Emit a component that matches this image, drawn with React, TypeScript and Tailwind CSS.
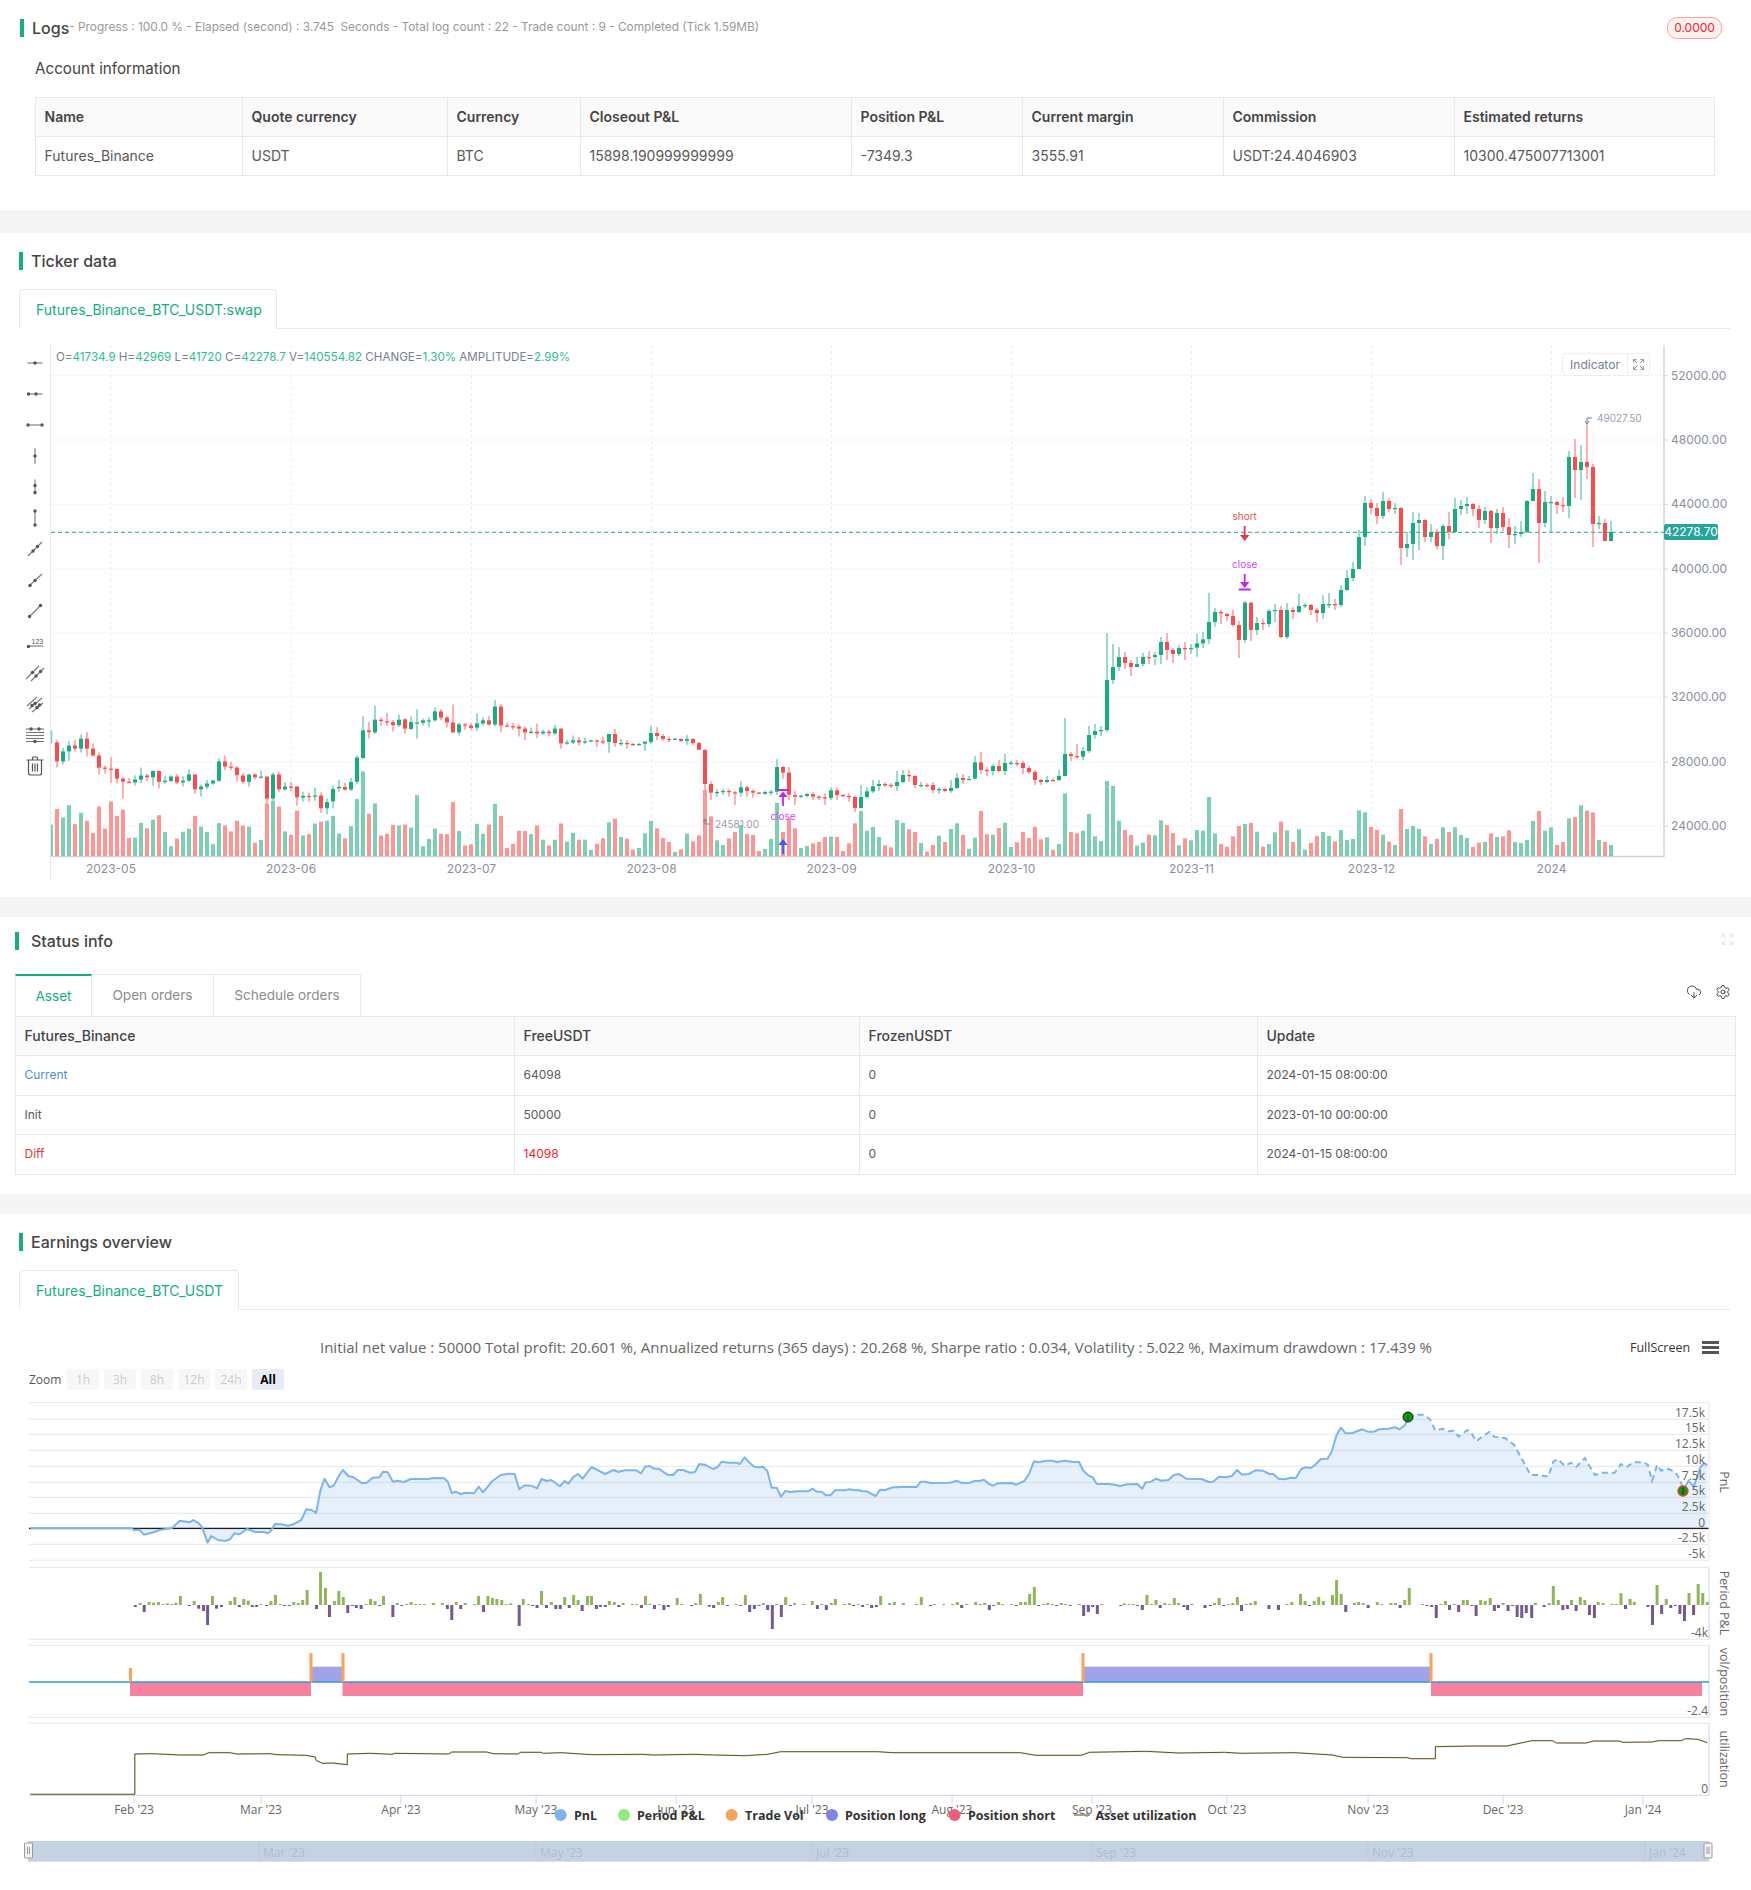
import { CloudDownload, Expand, Settings } from 'lucide-react';

type Candle = [number, number, number, number, number, number];

const z3: Candle[] = [
  [1,1168,1170,1132,1170,1405],[0,1167,1222,1160,1240,1360],[1,1193,1222,1183,1230,1385],[1,1176,1193,1163,1220,1349],[0,1176,1185,1160,1193,1404],
  [1,1156,1185,1144,1196,1371],[0,1156,1185,1137,1208,1394],[0,1185,1205,1170,1208,1430],[0,1205,1240,1196,1260,1353],[0,1240,1243,1234,1257,1417],
  [0,1243,1245,1210,1285,1339],[0,1244,1272,1244,1286,1380],[0,1272,1281,1268,1330,1362],[0,1281,1283,1270,1285,1444],[1,1275,1283,1262,1292,1443],
  [1,1263,1275,1240,1285,1400],[0,1263,1268,1258,1280,1416],[1,1250,1268,1248,1292,1391],[0,1250,1281,1248,1300,1378],[1,1278,1281,1263,1288,1427],
  [1,1266,1279,1262,1282,1468],[0,1266,1283,1258,1288,1446],[1,1278,1283,1265,1295,1426],[1,1260,1278,1246,1282,1417],[0,1260,1303,1260,1315,1380],
  [1,1295,1303,1290,1324,1411],[1,1286,1295,1276,1302,1427],[1,1278,1286,1275,1290,1462],[1,1222,1278,1214,1282,1401],[0,1222,1237,1205,1248,1408],
  [0,1237,1240,1222,1248,1425],[0,1240,1262,1236,1280,1394],[0,1263,1281,1255,1288,1408],[1,1260,1281,1258,1295,1411],[0,1260,1268,1258,1274,1458],
  [1,1266,1269,1249,1272,1450],[0,1266,1330,1266,1345,1344],[1,1260,1330,1255,1350,1337],[0,1260,1303,1252,1310,1353],[1,1295,1303,1282,1308,1425],
  [0,1295,1298,1282,1308,1435],[0,1295,1326,1295,1350,1365],[1,1322,1327,1310,1338,1437],[0,1322,1324,1312,1338,1433],[1,1321,1324,1298,1336,1402],
  [0,1321,1358,1312,1372,1397],[1,1340,1358,1330,1375,1394],[1,1302,1338,1292,1358,1380],[1,1296,1300,1275,1310,1431],[0,1296,1304,1284,1307,1445],
  [1,1282,1304,1270,1307,1410],[1,1211,1281,1205,1288,1331],[1,1132,1212,1092,1215,1251],[0,1132,1137,1108,1156,1374],[1,1101,1138,1060,1142,1344],
  [0,1101,1105,1094,1120,1437],[0,1106,1108,1082,1118,1432],[0,1108,1117,1102,1135,1406],[1,1101,1117,1086,1122,1408],[0,1100,1127,1098,1142,1405],
  [1,1108,1128,1092,1130,1414],[1,1109,1111,1071,1156,1320],[1,1103,1110,1098,1118,1468],[1,1103,1105,1095,1124,1447],[1,1077,1103,1066,1106,1417],
  [0,1077,1095,1070,1103,1432],[0,1095,1109,1090,1124,1433],[0,1109,1138,1057,1138,1340],[1,1115,1138,1110,1146,1424],[0,1115,1117,1110,1130,1466],
  [0,1118,1125,1110,1130,1463],[1,1112,1124,1083,1134,1403],[1,1103,1112,1095,1118,1432],[0,1103,1115,1090,1118,1405],[1,1063,1115,1045,1120,1345],
  [0,1063,1118,1055,1138,1380],[0,1118,1120,1110,1122,1473],[0,1120,1122,1110,1130,1461],[0,1121,1127,1115,1150,1423],[0,1127,1138,1121,1160,1424],
  [1,1136,1138,1124,1142,1433],[0,1136,1141,1112,1155,1408],[1,1136,1141,1130,1145,1449],[0,1136,1140,1130,1150,1466],[1,1127,1141,1116,1145,1449],
  [0,1127,1170,1127,1185,1402],[1,1167,1170,1160,1174,1455],[1,1161,1167,1147,1172,1429],[0,1161,1167,1152,1176,1449],[1,1164,1167,1153,1172,1449],
  [1,1161,1164,1160,1166,1479],[0,1161,1164,1160,1180,1461],
];

const z4: Candle[] = [
  [0,784,787,770,792,1075],[1,762,786,762,818,1027],[0,762,789,746,800,1016],[1,789,791,777,798,1071],[0,789,792,780,806,1076],
  [0,792,794,789,797,1109],[1,792,795,788,797,1104],[1,785,791,783,812,1060],[1,759,786,738,792,1023],[0,759,768,741,780,1045],
  [0,768,777,762,782,1074],[0,777,779,770,786,1086],[1,776,778,774,780,1116],[0,777,783,775,786,1108],[1,777,782,765,795,1061],
  [0,777,789,774,795,1084],[0,789,809,786,810,1066],[0,810,912,808,1030,930],[0,912,938,904,960,1009],[1,936,938,928,950,1081],
  [1,933,936,926,945,1095],[0,933,936,926,950,1075],[0,937,939,933,975,1056],[1,922,938,903,950,1035],[0,922,933,918,950,1062],
  [0,933,938,928,953,1065],[0,938,941,936,942,1113],[1,936,941,932,944,1107],[1,935,938,930,946,1077],[1,861,935,837,945,969],
  [0,861,878,858,896,1056],[0,878,944,862,960,1016],[0,945,950,934,974,1045],[1,947,950,945,955,1104],[1,942,948,938,952,1098],
  [0,942,950,937,960,1090],[0,950,953,946,960,1086],[0,952,954,940,975,1071],[1,931,954,922,960,1070],[0,931,945,922,960,1071],
  [0,945,948,942,950,1113],[0,948,950,940,965,1090],[0,951,984,948,996,1030],[1,951,984,915,984,993],[1,934,951,922,956,1052],
  [1,919,934,900,940,1041],[1,912,918,900,932,1071],[0,912,916,906,922,1096],[0,915,918,910,924,1102],[1,906,918,873,932,1020],
  [1,885,906,870,910,1029],[0,885,888,870,905,1048],[0,888,915,885,924,1056],[1,915,918,906,922,1089],[0,915,917,910,922,1115],
  [0,915,930,906,940,1095],[1,927,930,922,942,1067],[0,927,933,924,936,1086],[1,924,933,900,938,1047],[1,894,924,880,928,1030],
  [0,894,900,882,912,1065],[1,897,900,888,900,1107],[1,847,896,828,898,1073],[0,847,870,816,882,993],[0,870,873,862,888,1063],
  [1,858,873,852,886,1064],[0,858,873,840,876,1044],[1,849,873,822,885,1028],[1,848,851,842,856,1101],[0,849,851,840,858,1087],
  [0,849,864,843,882,1056],[0,864,876,858,882,1074],[0,876,900,870,915,1040],[0,900,906,897,915,1078],[1,900,906,888,908,1072],
  [0,900,902,895,904,1109],[1,888,900,870,903,1092],[1,822,888,714,888,940],[0,822,828,816,843,1056],[0,828,831,792,837,1060],
  [1,813,830,800,840,1052],[1,765,813,738,818,1002],[1,753,765,732,776,1069],[1,750,753,738,768,1083],[1,600,750,459,756,903],
  [1,561,600,492,612,918],[1,531,561,501,573,1022],[0,531,549,516,567,1050],[0,549,561,540,588,1065],[1,552,561,531,561,1097],
  [1,531,552,519,558,1088],[0,531,534,513,552,1064],[1,525,531,516,555,1066],[1,486,525,471,552,1021],[0,486,510,459,540,1035],
  [0,510,522,504,549,1059],[1,504,522,495,528,1096],[0,504,507,486,540,1075],[1,504,507,492,522,1081],
];

const z5: Candle[] = [
  [1,790,803,762,830,1350],[1,778,790,755,804,1352],[1,726,777,638,792,1251],[1,696,726,684,740,1360],[0,696,700,690,732,1392],
  [0,702,708,698,722,1400],[0,708,735,690,740,1369],[0,735,780,723,834,1338],[1,668,780,662,789,1332],[0,668,750,666,783,1329],
  [1,729,750,711,765,1355],[0,729,732,716,750,1400],[1,693,732,687,741,1392],[1,690,693,672,726,1357],[0,690,771,678,774,1325],
  [1,690,771,669,777,1351],[0,690,696,681,717,1386],[1,678,696,642,699,1348],[1,675,678,669,684,1409],[0,675,690,672,705,1389],
  [0,690,699,684,726,1368],[1,672,699,645,717,1356],[1,672,675,639,684,1368],[0,672,675,657,690,1384],[1,630,675,615,681,1350],
  [1,594,630,570,633,1380],[1,567,594,546,603,1377],[1,471,567,450,567,1291],[1,369,471,348,498,1297],[0,369,384,357,402,1341],
  [0,384,408,369,432,1350],[1,363,408,336,417,1364],[0,363,387,354,396,1385],[1,384,387,369,402,1395],[0,384,504,381,555,1287],
  [1,492,504,456,531,1347],[1,429,492,396,540,1338],[1,420,429,399,510,1347],[0,420,471,417,486,1369],[1,456,471,432,486,1392],
  [0,456,498,447,507,1377],[1,438,498,432,540,1342],[0,438,456,396,477,1356],[1,387,456,354,459,1342],[1,378,387,360,405,1365],
  [1,372,378,351,402,1374],[0,372,387,369,408,1401],[0,387,420,375,444,1388],[1,393,420,381,432,1386],[0,393,444,390,489,1360],
  [1,399,444,387,462,1371],[0,399,441,381,453,1369],[0,441,465,414,504,1351],[1,462,465,438,492,1386],[1,456,462,423,471,1389],
  [1,363,456,360,459,1380],[1,327,363,279,363,1323],[0,327,429,297,549,1293],[1,366,429,333,441,1352],[1,366,369,348,456,1342],
  [0,366,375,363,402,1395],[0,375,378,351,396,1386],[1,231,378,213,414,1315],[0,231,270,177,354,1311],[1,246,270,195,360,1276],
  [0,246,261,132,297,1292],[0,261,432,252,501,1297],[1,429,432,408,447,1380],[0,429,483,417,483,1386],[1,456,483,423,483,1395],
];

const candles: Candle[] = [
  ...z3.map((c) => [c[0], ...c.slice(1).map((v) => 340 + v / 2.9)] as Candle),
  ...z4.map((c) => [c[0], ...c.slice(1).map((v) => 480 + v / 3)] as Candle),
  ...z5.map((c) => [c[0], ...c.slice(1).map((v) => 380 + v / 3)] as Candle),
];

const priceTicks: [string, number][] = [
  ['52000.00', 375.7], ['48000.00', 440], ['44000.00', 504.3], ['40000.00', 569],
  ['36000.00', 633], ['32000.00', 697], ['28000.00', 762], ['24000.00', 826],
];
const dateTicks: [string, number][] = [
  ['2023-05', 111], ['2023-06', 291], ['2023-07', 471.5], ['2023-08', 651.5], ['2023-09', 831.5],
  ['2023-10', 1011.5], ['2023-11', 1191.5], ['2023-12', 1371.5], ['2024', 1551.5],
];

type ToolIcon = { lines: number[][]; dots: number[][]; label?: boolean; trash?: boolean };
const toolIcons: ToolIcon[] = [
  { lines: [[2.5, 10, 17.5, 10]], dots: [[10, 10]] },
  { lines: [[2.5, 10, 17.5, 10]], dots: [[3.5, 10], [11, 10]] },
  { lines: [[3, 10, 17, 10]], dots: [[3, 10], [17, 10]] },
  { lines: [[10, 2, 10, 18]], dots: [[10, 10]] },
  { lines: [[10, 2.5, 10, 17.5]], dots: [[10, 8.5], [10, 15.5]] },
  { lines: [[10, 3, 10, 17]], dots: [[10, 3], [10, 17]] },
  { lines: [[3, 17, 17, 3]], dots: [[8, 12], [12.5, 7.5]] },
  { lines: [[4, 16, 17, 4]], dots: [[5, 15.5], [10, 10.5]] },
  { lines: [[4, 16, 16, 4]], dots: [[4.5, 15.5], [15.5, 4.5]] },
  { lines: [[4, 14, 18, 14]], dots: [[3.5, 14.5]], label: true },
  { lines: [[1, 16, 14, 3], [6, 18, 19, 5]], dots: [[7.5, 9.5], [11, 13], [15.5, 8.5]] },
  { lines: [[2, 12, 12, 3], [4, 15, 17, 4], [7, 18, 18, 9]], dots: [[7, 11.5], [10, 9.5], [12, 13.5], [14.5, 11]] },
  { lines: [[1, 4, 19, 4], [1, 7.5, 19, 7.5], [1, 10.5, 19, 10.5], [1, 13.5, 19, 13.5], [1, 16.5, 19, 16.5]], dots: [[6, 4], [14, 4], [10, 16.5]] },
  { lines: [], dots: [], trash: true },
];

const pnlA = [
  [68,445],[295,445],[300,450],[312,449],[322,464],[340,458],[358,450],[385,444],[403,422],[425,427],[433,420],[445,430],[453,442],[465,488],[473,468],[488,480],
  [505,483],[515,478],[525,460],[537,463],[553,447],[572,456],[590,456],[600,460],[607,452],[616,432],[630,433],[645,437],[660,431],[675,420],[686,388],[698,390],
  [708,399],[718,330],[727,296],[738,322],[748,316],[760,285],[768,270],[780,288],[792,292],[810,309],[820,309],[835,293],[850,292],[858,275],[868,276],[880,305],
  [890,302],[905,306],[920,297],[960,297],[970,294],[995,295],[1003,305],[1012,339],[1020,335],[1032,342],[1042,338],[1062,340],[1072,320],[1082,337],[1103,303],
  [1122,285],[1140,281],[1153,282],[1163,328],[1175,316],[1190,317],[1203,325],[1213,297],[1225,303],[1235,300],[1254,319],[1265,303],[1273,311],[1285,290],[1295,282],
  [1305,296],[1325,261],[1340,271],[1355,282],[1375,270],[1385,276],[1400,271],[1425,271],[1436,280],[1445,260],[1455,258],[1465,266],[1475,266],[1495,284],[1508,285],
  [1518,270],[1530,270],
].map(([x, y]) => [x / 2.24, 1380 + y / 3]);

const pnlB = [
  [0,218],[15,216],[28,192],[45,194],[68,207],[82,202],[95,185],[115,188],[140,188],[150,192],[164,172],[180,190],[193,200],[205,202],[218,200],[232,212],[245,263],[260,263],
  [273,290],[286,273],[300,276],[320,274],[355,274],[367,266],[380,275],[395,275],[408,286],[422,285],[435,271],[465,271],[478,268],[495,271],[505,270],[515,274],[530,274],
  [557,288],[570,269],[585,270],[610,262],[625,262],[640,260],[680,261],[692,245],[705,245],[722,249],[780,248],[800,242],[815,249],[840,248],[853,243],[870,242],[882,239],
  [897,252],[910,257],[922,250],[965,249],[978,254],[1003,243],[1017,222],[1032,184],[1045,187],[1070,182],[1085,182],[1100,186],[1125,182],[1145,185],[1167,186],[1180,212],
  [1195,226],[1208,232],[1220,252],[1255,252],[1275,254],[1290,258],
].map(([x, y]) => [690 + x / 3, 1400 + y / 3]);

const pnlC = [
  [65,313],[90,312],[102,326],[110,307],[122,306],[135,296],[148,302],[165,300],[178,285],[190,282],[208,296],[245,297],[262,306],[272,305],[287,290],[305,292],[318,288],
  [330,270],[342,284],[358,282],[375,271],[392,272],[408,282],[418,282],[430,296],[445,298],[460,293],[472,294],[485,267],[495,262],[508,264],[518,255],[532,237],[548,236],
  [558,215],[570,165],[580,143],[592,160],[608,159],[632,148],[645,155],[660,155],[672,148],[695,146],[710,142],[722,148],[735,135],[742,112],
].map(([x, y]) => [1100 + x / 2.409, 1380 + y / 3]);

const pnlDash = [
  [742,112],[760,104],[780,104],[795,118],[808,152],[825,146],[840,154],[852,152],[864,170],[885,150],[895,160],[906,184],[920,170],[938,156],[950,170],[975,174],[998,195],
  [1020,245],[1037,285],[1060,285],[1080,290],[1092,245],[1103,238],[1120,258],[1135,248],[1148,260],[1168,234],[1192,285],[1210,278],[1240,278],[1255,252],[1268,262],[1285,247],
  [1310,247],[1320,255],[1330,302],[1342,255],[1352,272],[1365,265],[1385,275],[1398,300],[1405,330],
].map(([x, y]) => [1100 + x / 2.409, 1380 + y / 3]);

const pnlEnd = [[1405,330],[1418,302],[1430,320],[1447,260],[1455,250],[1463,255]].map(([x, y]) => [1100 + x / 2.409, 1380 + y / 3]);

const toPts = (pts: number[][]) => pts.map(([x, y]) => `${x.toFixed(1)},${y.toFixed(1)}`).join(' ');

const pnlSolid = [...pnlA, ...pnlB, ...pnlC];
const pnlAll = [...pnlSolid, ...pnlDash, ...pnlEnd];
const zeroY = 1528.3;

const period = [
  ...[
    [303,681],[314,669],[323,696],[334,666],[344,668],[355,666],[365,672],[375,670],[385,672],[394,668],[404,648],[424,677],[435,663],[445,686],[456,693],[465,735],[476,648],[485,686],
    [496,681],[516,663],[526,651],[536,681],[546,657],[556,662],[565,681],[575,681],[585,672],[597,677],[607,663],[617,645],[628,672],[637,677],[648,677],[658,666],[668,669],[678,660],
    [688,630],[709,687],[718,576],[729,624],[738,711],[749,663],[759,633],[769,651],[779,699],[789,677],[798,684],[809,687],[820,672],[830,657],[840,663],[850,678],[859,648],[880,711],
    [890,669],[900,678],[911,672],[921,666],[931,672],[941,672],[951,672],[971,669],[991,669],[1002,687],[1012,720],[1022,666],[1032,687],[1042,669],[1063,672],[1072,648],[1083,696],
    [1093,648],[1103,654],[1113,657],[1124,660],[1134,672],[1144,670],[1163,738],[1172,657],[1184,672],[1193,677],[1203,684],[1213,633],[1224,684],[1235,666],[1245,687],[1255,687],
    [1265,651],[1275,684],[1285,645],[1295,660],[1304,693],[1316,648],[1325,648],[1336,687],[1345,681],[1356,681],[1365,663],[1376,666],[1386,681],[1396,669],[1416,672],[1426,672],
    [1437,684],[1446,648],[1456,672],[1466,687],[1477,672],[1487,690],[1497,681],[1517,654],[1527,672],
  ].map(([x, y]) => [x / 2.24, 1380 + y / 3]),
  ...[
    [5,617],[17,609],[31,582],[58,620],[71,624],[85,606],[98,591],[112,617],[139,612],[152,617],[166,585],[179,636],[193,627],[207,617],[220,609],[233,630],[247,687],[260,612],[274,651],
    [287,591],[301,617],[314,609],[341,612],[367,603],[382,627],[395,612],[409,630],[424,609],[436,597],[464,612],[478,609],[491,618],[505,612],[518,621],[532,612],[545,624],[559,621],
    [572,588],[599,609],[613,606],[640,609],[680,612],[694,591],[722,617],[734,612],[761,612],[788,612],[802,606],[815,624],[830,612],[857,606],[871,612],[884,609],[898,630],[911,617],
    [926,606],[938,612],[965,612],[979,617],[992,606],[1006,606],[1019,582],[1033,561],[1046,618],[1060,612],[1073,609],[1087,612],[1100,617],[1114,609],[1127,612],[1141,617],[1168,612],
    [1181,648],[1195,636],[1208,621],[1222,642],[1235,612],
  ].map(([x, y]) => [690 + x / 3, 1400 + y / 3]),
  ...[
    [50,677],[58,670],[70,672],[80,672],[90,677],[102,690],[113,645],[124,672],[135,660],[145,684],[156,669],[167,672],[179,654],[189,669],[202,681],[211,690],[222,672],[253,684],[266,678],
    [276,669],[287,654],[298,678],[309,672],[320,669],[331,651],[341,693],[352,672],[363,669],[374,663],[407,687],[430,690],[451,672],[462,666],[483,642],[494,663],[505,678],[516,663],
    [527,651],[538,663],[560,645],[570,600],[581,642],[592,696],[613,669],[623,666],[634,669],[646,684],[668,666],[679,672],[701,669],[712,669],[723,684],[734,660],[745,624],[777,672],
    [788,678],[799,681],[810,714],[821,672],[832,663],[842,690],[853,672],[864,696],[875,660],[885,660],[896,678],[906,708],[917,660],[928,663],[940,654],[950,693],[960,684],[971,669],
    [983,693],[994,678],[1005,711],[1016,714],[1027,699],[1040,714],[1049,669],[1070,681],[1082,669],[1092,618],[1104,660],[1115,690],[1126,687],[1136,660],[1147,693],[1157,651],[1168,660],
    [1179,705],[1191,714],[1200,666],[1212,669],[1233,672],[1244,672],[1255,639],[1266,687],[1277,657],[1287,666],[1320,681],[1331,735],[1342,615],[1353,702],[1364,657],[1375,684],[1386,678],
    [1397,702],[1408,723],[1419,639],[1430,705],[1441,612],[1452,639],[1463,666],
  ].map(([x, y]) => [1100 + x / 2.409, 1380 + y / 3]),
];

const utilization = [
  ...[
    [68,1243],[302,1243],[302,1122],[340,1121],[405,1125],[455,1125],[468,1118],[515,1118],[530,1122],[605,1121],[620,1124],[685,1126],[706,1131],[708,1141],[722,1150],[745,1149],[778,1154],
    [778,1122],[830,1120],[878,1123],[885,1120],[1005,1122],[1012,1116],[1090,1116],[1105,1121],
  ].map(([x, y]) => [x / 2.24, 1380 + y / 3]),
  ...[
    [35,162],[40,157],[80,157],[85,160],[120,158],[180,164],[280,163],[300,165],[380,163],[420,165],[480,167],[525,163],[550,155],[640,155],[740,155],[770,158],[1020,158],[1050,166],[1140,166],[1155,157],
  ].map(([x, y]) => [500 + x / 1.96, 1700 + y / 3]),
  ...[
    [110,1114],[190,1119],[300,1117],[340,1120],[470,1118],[560,1125],[585,1132],[740,1133],[750,1136],[808,1136],[808,1100],[900,1098],[980,1098],[1040,1082],[1090,1082],[1100,1089],[1170,1089],
    [1190,1083],[1250,1083],[1260,1087],[1330,1086],[1345,1082],[1400,1082],[1410,1076],[1440,1078],[1463,1088],
  ].map(([x, y]) => [1100 + x / 2.409, 1380 + y / 3]),
];

const gridY = [1402.7, 1419.3, 1434.3, 1450.3, 1466.3, 1482.3, 1497.3, 1513.3, 1529.3, 1544.3, 1560.3];
const pnlLabels: [string, number][] = [
  ['17.5k', 1413], ['15k', 1428], ['12.5k', 1444], ['10k', 1460], ['7.5k', 1476], ['5k', 1491],
  ['2.5k', 1507], ['0', 1523], ['-2.5k', 1538], ['-5k', 1554],
];
const monthTicks: [string, number][] = [
  ["Feb '23", 134], ["Mar '23", 261], ["Apr '23", 401], ["May '23", 536], ["Jun '23", 676], ["Jul '23", 812],
  ["Aug '23", 952], ["Sep '23", 1092], ["Oct '23", 1227], ["Nov '23", 1368], ["Dec '23", 1503], ["Jan '24", 1643],
];
const navTicks: [string, number][] = [
  ["Mar '23", 259], ["May '23", 536], ["Jul '23", 812], ["Sep '23", 1092], ["Nov '23", 1368], ["Jan '24", 1645],
];
const legend: [string, string, number, number][] = [
  ['PnL', '#7cb5ec', 560.7, 574],
  ['Period P&L', '#90ed7d', 624, 637],
  ['Trade Vol', '#f7a35c', 731.6, 745],
  ['Position long', '#8085e9', 832, 845],
  ['Position short', '#f15c80', 954.6, 968],
];
const sideTitles: [string, number][] = [['PnL', 1482], ['Period P&L', 1603], ['vol/position', 1682], ['utilization', 1759]];

function SectionTitle({ title, left, gap, children }: { title: string; left: string; gap: string; children?: React.ReactNode }) {
  return (
    <div className={`flex items-center h-[18px] ${left}`}>
      <div className="w-[4px] h-[18px] bg-[#16ae81]" />
      <span className={`${gap} text-[16px] font-medium text-[#444]`}>{title}</span>
      {children}
    </div>
  );
}

function TabHead({ label, width }: { label: string; width: string }) {
  return (
    <div className="flex border-b border-[#e8e8e8] ml-[19px] w-[1711px] h-[40px]">
      <div className={`${width} h-[40px] border border-b-white border-[#e8e8e8] rounded-t-[4px] flex items-center pl-[16px] text-[14px] text-[#10b07e] bg-white`}>
        {label}
      </div>
    </div>
  );
}

function KlineChart() {
  return (
    <div className="relative h-[568px]">
      <svg width="1751" height="568" viewBox="0 329 1751 568" className="block">
        {priceTicks.map(([, y]) => (
          <line key={y} x1="51" x2="1664" y1={y} y2={y} stroke="#ededed" strokeDasharray="2 2" />
        ))}
        {dateTicks.map(([, x]) => (
          <line key={x} x1={x} x2={x} y1="345" y2="856" stroke="#ededed" strokeDasharray="3 3" />
        ))}
        <line x1="50.5" x2="50.5" y1="345" y2="880" stroke="#e8e8e8" />
        <line x1="1664" x2="1664" y1="345" y2="857" stroke="#d4d4d4" strokeWidth="1.5" />
        <line x1="51" x2="1664" y1="856.5" y2="856.5" stroke="#d4d4d4" strokeWidth="1.5" />
        {candles.map((c, i) => {
          const x = 51 + 6 * i;
          const w = i === 0 ? 2 : 4;
          return <rect key={i} x={i === 0 ? 51 : x - 2} y={c[5]} width={w} height={856 - c[5]} fill={c[0] ? '#7dcfb3' : '#ff9494'} />;
        })}
        {candles.map((c, i) => {
          const x = 51 + 6 * i;
          return (
            <g key={i}>
              <line x1={i === 0 ? 51.5 : x} x2={i === 0 ? 51.5 : x} y1={c[3]} y2={c[4]} stroke={c[0] ? '#82d1b6' : '#ff9c9c'} strokeWidth="1.6" />
              {i > 0 && (
                <rect x={x - 2} y={c[1]} width="4" height={Math.max(c[2] - c[1], 1.2)} fill={c[0] ? '#18ad80' : '#fd4a4f'} />
              )}
            </g>
          );
        })}
        <line x1="51" x2="1664" y1="532.3" y2="532.3" stroke="#26a69a" strokeWidth="1" strokeDasharray="4 3" />
        {priceTicks.map(([label, y]) => (
          <g key={label}>
            <line x1="1664" x2="1668" y1={y} y2={y} stroke="#d4d4d4" />
            <text x="1671" y={y + 4} className="fill-[#8a8f9c] text-[12px] font-['Inter',sans-serif]">{label}</text>
          </g>
        ))}
        {dateTicks.map(([label, x]) => (
          <text key={label} x={x} y="873" textAnchor="middle" className="fill-[#8a8f9c] text-[12px] font-['Inter',sans-serif]">{label}</text>
        ))}
        <rect x="1664" y="524" width="54" height="16" rx="2" fill="#26a69a" />
        <text x="1691" y="536" textAnchor="middle" className="fill-white text-[12px] font-['Inter',sans-serif]">42278.70</text>

        {/* high / low marks */}
        <path d="M1592 418 H1587 V423" fill="none" stroke="#76808f" />
        <path d="M1585 421 L1587 424 L1589 421" fill="none" stroke="#76808f" />
        <text x="1597" y="421.5" className="fill-[#9aa0ac] text-[10px] font-['Inter',sans-serif]">49027.50</text>
        <path d="M705 820 V824 H710" fill="none" stroke="#76808f" />
        <path d="M703 822 L705 819 L707 822" fill="none" stroke="#76808f" />
        <text x="715" y="828" className="fill-[#9aa0ac] text-[10px] font-['Inter',sans-serif]">24581.00</text>

        {/* trade marks */}
        <text x="1244.7" y="520" textAnchor="middle" className="fill-[#f0505a] text-[10px] font-['Inter',sans-serif]">short</text>
        <line x1="1244.7" x2="1244.7" y1="526" y2="537" stroke="#e8394a" strokeWidth="1.8" />
        <path d="M1240 535 L1249.4 535 L1244.7 541 Z" fill="#e8394a" />
        <text x="1244.7" y="568" textAnchor="middle" className="fill-[#c94ff0] text-[10px] font-['Inter',sans-serif]">close</text>
        <line x1="1244.7" x2="1244.7" y1="574" y2="584" stroke="#c026f0" strokeWidth="1.8" />
        <path d="M1240 582 L1249.4 582 L1244.7 588 Z" fill="#c026f0" />
        <rect x="1238.7" y="588.5" width="12" height="2" fill="#c026f0" />

        <rect x="777" y="789" width="12" height="2" fill="#c026f0" />
        <path d="M778.4 797 L787.6 797 L783 791.5 Z" fill="#c026f0" />
        <line x1="783" x2="783" y1="795" y2="806" stroke="#c026f0" strokeWidth="1.8" />
        <text x="783" y="820" textAnchor="middle" className="fill-[#c94ff0] text-[10px] font-['Inter',sans-serif]">close</text>
        <path d="M778.4 845 L787.6 845 L783 839 Z" fill="#3d5afe" />
        <line x1="783" x2="783" y1="843" y2="854" stroke="#3d5afe" strokeWidth="1.8" />
      </svg>

      <div className="absolute left-[56px] top-[20px] text-[11.6px] leading-[16px] whitespace-nowrap text-[#76808f]">
        O=<span className="text-[#2dbd8f]">41734.9</span> H=<span className="text-[#2dbd8f]">42969</span> L=<span className="text-[#2dbd8f]">41720</span> C=
        <span className="text-[#2dbd8f]">42278.7</span> V=<span className="text-[#2dbd8f]">140554.82</span> CHANGE=<span className="text-[#2dbd8f]">1.30%</span> AMPLITUDE=
        <span className="text-[#2dbd8f]">2.99%</span>
      </div>

      <div className="absolute left-[1562px] top-[24px] w-[88px] h-[23px] flex items-center rounded-[3px] border border-[#eeeeee] bg-white text-[12px] text-[#76808f]">
        <span className="w-[65px] text-center border-r border-[#eeeeee] leading-[21px]">Indicator</span>
        <Expand size={13} strokeWidth={1.5} className="ml-[4px] text-[#76808f]" />
      </div>

      <div className="absolute left-[25px] top-[24px] flex flex-col gap-[11px] text-[#666]">
        {toolIcons.map((icon, i) => (
          <svg key={i} width="20" height="20" viewBox="0 0 20 20" className="block">
            {icon.lines.map((l, j) => (
              <line key={j} x1={l[0]} y1={l[1]} x2={l[2]} y2={l[3]} stroke="#777" strokeWidth="1.1" />
            ))}
            {icon.dots.map((d, j) => (
              <circle key={j} cx={d[0]} cy={d[1]} r="1.7" fill="#555" />
            ))}
            {icon.label && (
              <text x="6.5" y="12" className="fill-[#555] text-[7px] font-['Liberation_Sans',sans-serif]">123</text>
            )}
            {icon.trash && (
              <path
                d="M1.5 4 H18.5 M7.5 4 V2 Q7.5 1 8.5 1 H11.5 Q12.5 1 12.5 2 V4 M3.5 4 V17 Q3.5 19 5.5 19 H14.5 Q16.5 19 16.5 17 V4 M7.5 7.5 V15.5 M10 7.5 V15.5 M12.5 7.5 V15.5"
                fill="none"
                stroke="#555"
                strokeWidth="1.2"
              />
            )}
          </svg>
        ))}
      </div>
    </div>
  );
}

function OverviewChart() {
  return (
    <svg width="1751" height="495" viewBox="0 1395 1751 495" className="block">
      {gridY.map((y) => (
        <line key={y} x1="29" x2="1709" y1={y} y2={y} stroke="#e6e6e6" />
      ))}
      <polygon points={`${toPts(pnlAll)} ${pnlAll[pnlAll.length - 1][0]},${zeroY} 30,${zeroY}`} fill="#7cb5ec" fillOpacity="0.2" />
      <line x1="29" x2="1709" y1={zeroY} y2={zeroY} stroke="#1c1c28" strokeWidth="1.2" />
      <polyline points={toPts(pnlSolid)} fill="none" stroke="#7cb5ec" strokeWidth="2" strokeLinejoin="round" />
      <polyline points={toPts(pnlDash)} fill="none" stroke="#7cb5ec" strokeWidth="2" strokeDasharray="6 4" />
      <polyline points={toPts(pnlEnd)} fill="none" stroke="#7cb5ec" strokeWidth="2" />
      <line x1="1709" x2="1709" y1="1402.7" y2="1560.3" stroke="#e6e6e6" />
      {pnlLabels.map(([label, y]) => (
        <text key={label} x="1705" y={y + 4} textAnchor="end" className="fill-[#666] text-[12px] font-['Open_Sans',sans-serif]">{label}</text>
      ))}
      <g>
        <circle cx="1408" cy="1417" r="5" fill="#0a9a0a" stroke="#1c1c1c" />
        <line x1="1408" x2="1408" y1="1413.5" y2="1420.5" stroke="#0d3d0d" />
        <circle cx="1683" cy="1491" r="5" fill="#0a9a0a" stroke="#f03a3a" strokeWidth="1.4" />
        <line x1="1683" x2="1683" y1="1487.5" y2="1494.5" stroke="#0d3d0d" />
      </g>

      <line x1="29" x2="1709" y1="1567.3" y2="1567.3" stroke="#e6e6e6" />
      <line x1="29" x2="1709" y1="1639.3" y2="1639.3" stroke="#e6e6e6" />
      <line x1="1709" x2="1709" y1="1567.3" y2="1639.3" stroke="#ccd6eb" />
      {period.map(([x, y], i) => (
        <rect
          key={i}
          x={x - 1.5}
          y={Math.min(y, 1605)}
          width="3"
          height={Math.max(Math.abs(y - 1605), 1)}
          fill={y < 1605 ? '#91b55b' : '#755a90'}
        />
      ))}
      <text x="1708" y="1637" textAnchor="end" className="fill-[#666] text-[12px] font-['Open_Sans',sans-serif]">-4k</text>

      <line x1="29" x2="1709" y1="1645.3" y2="1645.3" stroke="#e6e6e6" />
      <line x1="29" x2="1709" y1="1717.3" y2="1717.3" stroke="#e6e6e6" />
      <line x1="1709" x2="1709" y1="1645.3" y2="1717.3" stroke="#ccd6eb" />
      <rect x="130" y="1682" width="181" height="14" fill="#f7829f" />
      <rect x="342.5" y="1682" width="740.5" height="14" fill="#f7829f" />
      <rect x="1431" y="1682" width="271" height="14" fill="#f7829f" />
      <rect x="311" y="1666.7" width="31.5" height="15.3" fill="#a0a3e8" />
      <rect x="1083" y="1666.7" width="348" height="15.3" fill="#a0a3e8" />
      <line x1="29" x2="1709" y1="1682" y2="1682" stroke="#2a9dd6" strokeWidth="1.6" />
      <rect x="129" y="1668" width="3" height="14" fill="#f7a35c" />
      <rect x="309.5" y="1653" width="3" height="29" fill="#f7a35c" />
      <rect x="341.5" y="1653" width="3" height="29" fill="#f7a35c" />
      <rect x="1081.5" y="1653" width="3" height="29" fill="#f7a35c" />
      <rect x="1429.5" y="1653" width="3" height="29" fill="#f7a35c" />
      <text x="1708" y="1715" textAnchor="end" className="fill-[#666] text-[12px] font-['Open_Sans',sans-serif]">-2.4</text>

      <line x1="29" x2="1709" y1="1723.3" y2="1723.3" stroke="#e6e6e6" />
      <line x1="1709" x2="1709" y1="1723.3" y2="1795" stroke="#ccd6eb" />
      <line x1="29" x2="1709" y1="1795.3" y2="1795.3" stroke="#ccd6eb" />
      <polyline points={toPts(utilization)} fill="none" stroke="#ebe7da" strokeWidth="1.8" />
      <polyline points={toPts(utilization)} fill="none" stroke="#4f4208" strokeWidth="0.9" />
      <text x="1708" y="1793" textAnchor="end" className="fill-[#666] text-[12px] font-['Open_Sans',sans-serif]">0</text>

      {sideTitles.map(([label, y]) => (
        <text key={label} x="1720" y={y} transform={`rotate(90 1720 ${y})`} textAnchor="middle" className="fill-[#666] text-[12.5px] font-['Open_Sans',sans-serif]">{label}</text>
      ))}

      {monthTicks.map(([label, x]) => (
        <g key={label}>
          <line x1={x} x2={x} y1="1795" y2="1804" stroke="#ccd6eb" />
          <text x={x} y="1814" textAnchor="middle" className="fill-[#666] text-[12px] font-['Open_Sans',sans-serif]">{label}</text>
        </g>
      ))}

      {legend.map(([label, color, cx, tx]) => (
        <g key={label}>
          <circle cx={cx} cy="1815" r="6" fill={color} />
          <text x={tx} y="1819.5" className="fill-[#333] text-[12.5px] font-bold font-['Open_Sans',sans-serif]">{label}</text>
        </g>
      ))}
      <line x1="1074" x2="1090" y1="1815" y2="1815" stroke="#a89f78" strokeWidth="2" />
      <text x="1095.4" y="1819.5" className="fill-[#333] text-[12.5px] font-bold font-['Open_Sans',sans-serif]">Asset utilization</text>

      <rect x="28" y="1841" width="1681" height="20.7" fill="#c5d2e3" />
      {navTicks.map(([label, x]) => (
        <g key={label}>
          <line x1={x} x2={x} y1="1841" y2="1861" stroke="#bcc9db" />
          <text x={x + 4} y="1857" className="fill-[#aebccd] text-[12px] font-['Open_Sans',sans-serif]">{label}</text>
        </g>
      ))}
      {[24.5, 1704].map((x) => (
        <g key={x}>
          <rect x={x} y="1843" width="8" height="15" rx="1" fill="#f2f2f2" stroke="#999" />
          <line x1={x + 3} x2={x + 3} y1="1847" y2="1854" stroke="#999" />
          <line x1={x + 5} x2={x + 5} y1="1847" y2="1854" stroke="#999" />
        </g>
      ))}
    </svg>
  );
}

const bodyCell = 'border border-[#e8e8e8] px-[8.5px] text-left font-normal';

export default function App() {
  return (
    <div className="bg-[#f4f5f7] font-['Inter',sans-serif] w-[1751px]">
      <section className="relative bg-white h-[212px] border-b border-[#eceef0] pt-[19px]">
        <SectionTitle title="Logs" left="ml-[20px]" gap="ml-[8px]">
          <span className="text-[11.85px] text-[#999] whitespace-pre">- Progress : 100.0 % - Elapsed (second) : 3.745  Seconds - Total log count : 22 - Trade count : 9 - Completed (Tick 1.59MB)</span>
        </SectionTitle>
        <div className="absolute left-[1667px] top-[17px] w-[55px] h-[22px] rounded-[10px] border border-[#ffa39e] bg-[#fff1f0] flex items-center justify-center text-[12px] text-[#f5222d]">
          0.0000
        </div>
        <h3 className="ml-[35px] mt-[20px] h-[24px] leading-[24px] text-[15.2px] font-normal text-[#444]">Account information</h3>
        <table className="ml-[35px] mt-[16px] w-[1679px] table-fixed border-collapse text-[14px] text-[#595959]">
          <colgroup>
            <col className="w-[207px]" />
            <col className="w-[205px]" />
            <col className="w-[133px]" />
            <col className="w-[271px]" />
            <col className="w-[171px]" />
            <col className="w-[201px]" />
            <col className="w-[231px]" />
            <col className="w-[260px]" />
          </colgroup>
          <thead>
            <tr className="h-[39px]">
              {['Name', 'Quote currency', 'Currency', 'Closeout P&L', 'Position P&L', 'Current margin', 'Commission', 'Estimated returns'].map((h) => (
                <th key={h} className="border border-[#e8e8e8] px-[8.5px] pb-[1px] text-left font-semibold text-[14px] text-[#444] bg-[#fafafa]">{h}</th>
              ))}
            </tr>
          </thead>
          <tbody>
            <tr className="h-[39px]">
              {['Futures_Binance', 'USDT', 'BTC', '15898.190999999999', '-7349.3', '3555.91', 'USDT:24.4046903', '10300.475007713001'].map((c) => (
                <td key={c} className={`${bodyCell} pb-[1px]`}>{c}</td>
              ))}
            </tr>
          </tbody>
        </table>
      </section>

      <section className="mt-[21px] bg-white h-[664px] pt-[19px]">
        <SectionTitle title="Ticker data" left="ml-[19px]" gap="ml-[8px]" />
        <div className="mt-[19px]">
          <TabHead label="Futures_Binance_BTC_USDT:swap" width="w-[258px]" />
        </div>
        <KlineChart />
      </section>

      <section className="relative mt-[20px] bg-white h-[277px] pt-[15px]">
        <SectionTitle title="Status info" left="ml-[15px]" gap="ml-[12px]" />
        <Expand size={13} strokeWidth={1.5} className="absolute left-[1721px] top-[16px] text-[#dddddd]" />
        <CloudDownload size={16} strokeWidth={1.5} className="absolute left-[1686px] top-[67px] text-[#444]" />
        <Settings size={16} strokeWidth={1.5} className="absolute left-[1715px] top-[67px] text-[#444]" />
        <div className="ml-[15px] mt-[24px] flex h-[42px] text-[13.6px] text-[#8c8c8c]">
          <div className="w-[77px] border-t-2 border-t-[#16ae81] border-x border-[#e8e8e8] flex items-center justify-center text-[#10b07e]">Asset</div>
          <div className="w-[122px] border-t border-r border-[#e8e8e8] flex items-center justify-center">Open orders</div>
          <div className="w-[147px] border-t border-r border-[#e8e8e8] flex items-center justify-center">Schedule orders</div>
        </div>
        <table className="ml-[15px] w-[1720px] table-fixed border-collapse text-[12px] text-[#595959]">
          <colgroup>
            <col className="w-[499px]" />
            <col className="w-[345px]" />
            <col className="w-[398px]" />
            <col className="w-[478px]" />
          </colgroup>
          <thead>
            <tr className="h-[39px]">
              {['Futures_Binance', 'FreeUSDT', 'FrozenUSDT', 'Update'].map((h) => (
                <th key={h} className="border border-[#e8e8e8] px-[8.5px] pb-[1px] text-left font-medium text-[14px] text-[#444] bg-[#fafafa]">{h}</th>
              ))}
            </tr>
          </thead>
          <tbody>
            <tr className="h-[39.5px]">
              <td className={`${bodyCell} text-[#4a90d9]`}>Current</td>
              <td className={bodyCell}>64098</td>
              <td className={bodyCell}>0</td>
              <td className={bodyCell}>2024-01-15 08:00:00</td>
            </tr>
            <tr className="h-[39.5px]">
              <td className={bodyCell}>Init</td>
              <td className={bodyCell}>50000</td>
              <td className={bodyCell}>0</td>
              <td className={bodyCell}>2023-01-10 00:00:00</td>
            </tr>
            <tr className="h-[39.5px]">
              <td className={`${bodyCell} text-[#e0393e]`}>Diff</td>
              <td className={`${bodyCell} text-[#f5222d]`}>14098</td>
              <td className={bodyCell}>0</td>
              <td className={bodyCell}>2024-01-15 08:00:00</td>
            </tr>
          </tbody>
        </table>
      </section>

      <section className="mt-[20px] bg-white h-[676px] pt-[19px]">
        <SectionTitle title="Earnings overview" left="ml-[19px]" gap="ml-[8px]" />
        <div className="mt-[19px]">
          <TabHead label="Futures_Binance_BTC_USDT" width="w-[220px]" />
        </div>
        <div className="relative h-[85px] font-['Open_Sans',sans-serif]">
          <div className="absolute left-0 right-[-1px] top-[27px] text-center text-[15px] leading-[20px] text-[#666] whitespace-nowrap">
            Initial net value : 50000 Total profit: 20.601 %, Annualized returns (365 days) : 20.268 %, Sharpe ratio : 0.034, Volatility : 5.022 %, Maximum drawdown : 17.439 %
          </div>
          <div className="absolute left-[1630px] top-[29px] text-[12.5px] leading-[18px] text-[#333]">FullScreen</div>
          <div className="absolute left-[1702px] top-[31px] w-[17px] flex flex-col gap-[2px]">
            <div className="h-[3px] bg-[#555]" />
            <div className="h-[3px] bg-[#555]" />
            <div className="h-[3px] bg-[#555]" />
          </div>
          <div className="absolute left-[29px] top-[59px] flex items-center gap-[5px] text-[12px]">
            <span className="w-[33px] text-[#555]">Zoom</span>
            {['1h', '3h', '8h', '12h', '24h'].map((b) => (
              <span key={b} className="w-[32px] h-[21px] rounded-[2px] bg-[#f7f7f7] text-[#cccccc] flex items-center justify-center">{b}</span>
            ))}
            <span className="w-[32px] h-[21px] rounded-[2px] bg-[#e6ebf5] text-black font-bold flex items-center justify-center">All</span>
          </div>
        </div>
        <OverviewChart />
      </section>
    </div>
  );
}
